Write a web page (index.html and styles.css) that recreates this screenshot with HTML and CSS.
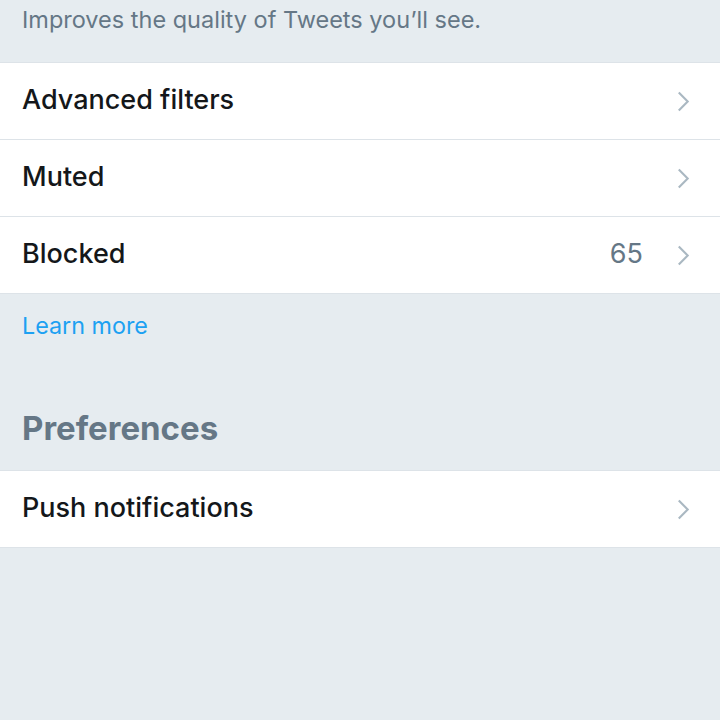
FILE: index.html
```html
<!DOCTYPE html>
<html lang="en">
<head>
    <meta charset="UTF-8">
    <title>Privacy and safety</title>
    <link rel="stylesheet" href="styles.css">
</head>
<body>
    <p class="note">Improves the quality of Tweets you’ll see.</p>

    <div class="group">
        <div class="row">
            <span class="label">Advanced filters</span>
            <svg class="chevron" viewBox="0 0 12 20"><path d="M1.5 1.5l8.5 8.5-8.5 8.5"/></svg>
        </div>
        <div class="row">
            <span class="label">Muted</span>
            <svg class="chevron" viewBox="0 0 12 20"><path d="M1.5 1.5l8.5 8.5-8.5 8.5"/></svg>
        </div>
        <div class="row">
            <span class="label">Blocked</span>
            <span class="value">65</span>
            <svg class="chevron" viewBox="0 0 12 20"><path d="M1.5 1.5l8.5 8.5-8.5 8.5"/></svg>
        </div>
    </div>

    <a class="link" href="#">Learn more</a>

    <h2 class="section-title">Preferences</h2>

    <div class="group">
        <div class="row">
            <span class="label">Push notifications</span>
            <svg class="chevron" viewBox="0 0 12 20"><path d="M1.5 1.5l8.5 8.5-8.5 8.5"/></svg>
        </div>
    </div>
</body>
</html>
```

FILE: styles.css
```css
/* General Page Styles */
body {
    font-family: 'Inter', 'Liberation Sans', sans-serif;
    background-color: #e6ecf0;
    margin: 0;
    padding: 0;
}

.note {
    margin: 0;
    height: 62px;
    padding: 6px 22px 0;
    box-sizing: border-box;
    font-size: 23.5px;
    line-height: 28px;
    color: #657786;
}

/* Grouped rows */
.group {
    background-color: white;
    border-top: 1px solid #dde3e8;
    border-bottom: 1px solid #dde3e8;
}

.row {
    display: flex;
    align-items: center;
    height: 76px;
    padding: 0 30px 4px 22px;
    box-sizing: border-box;
}

.row + .row {
    border-top: 1px solid #dde3e8;
    height: 77px;
}

.label {
    flex: 1;
    font-size: 27px;
    font-weight: 500;
    color: #14171a;
}

.value {
    font-size: 27px;
    color: #657786;
    margin-right: 34px;
}

.chevron {
    width: 13px;
    height: 21px;
    fill: none;
    stroke: #aab8c2;
    stroke-width: 2;
    margin-top: 4px;
}

.link {
    display: block;
    box-sizing: border-box;
    padding: 17px 22px 0;
    height: 66px;
    font-size: 23.3px;
    line-height: 30px;
    color: #1da1f2;
    text-decoration: none;
}

.section-title {
    margin: 0;
    height: 110px;
    box-sizing: border-box;
    padding: 48px 22px 0;
    font-size: 33px;
    line-height: 40px;
    font-weight: 700;
    color: #657786;
}
```
